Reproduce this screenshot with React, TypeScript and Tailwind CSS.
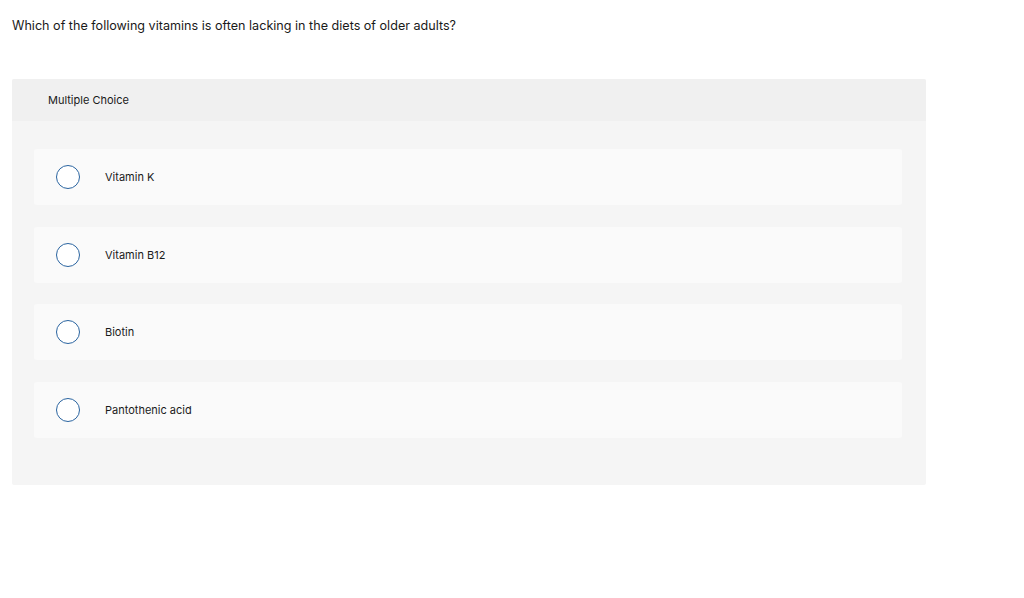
const options = ["Vitamin K", "Vitamin B12", "Biotin", "Pantothenic acid"];

function App() {
  return (
    <main className="min-h-screen bg-white font-['Inter','Liberation_Sans',sans-serif] text-[#1a1a1a]">
      <div className="px-3 pt-[17px]">
        <p className="text-[12.6px] leading-[18px]">
          Which of the following vitamins is often lacking in the diets of older adults?
        </p>

        <section className="mt-[44px] w-[914px] rounded-[2px] bg-[#f5f5f5]">
          <div className="flex h-[42px] items-center rounded-t-[2px] bg-[#f0f0f0] px-9 pt-px">
            <span className="text-[11px]">Multiple Choice</span>
          </div>

          <div className="flex flex-col gap-[21.5px] pl-[22px] pr-[24px] pt-[28px] pb-[47px]">
            {options.map((label) => (
              <div
                key={label}
                className="flex h-[56px] items-center rounded-[3px] bg-[#fafafa] pl-[22px]"
              >
                <span className="h-6 w-6 rounded-full border border-[#2a64a0] bg-white" />
                <span className="ml-[25px] pt-px text-[11px]">{label}</span>
              </div>
            ))}
          </div>
        </section>
      </div>
    </main>
  );
}

export default App;
